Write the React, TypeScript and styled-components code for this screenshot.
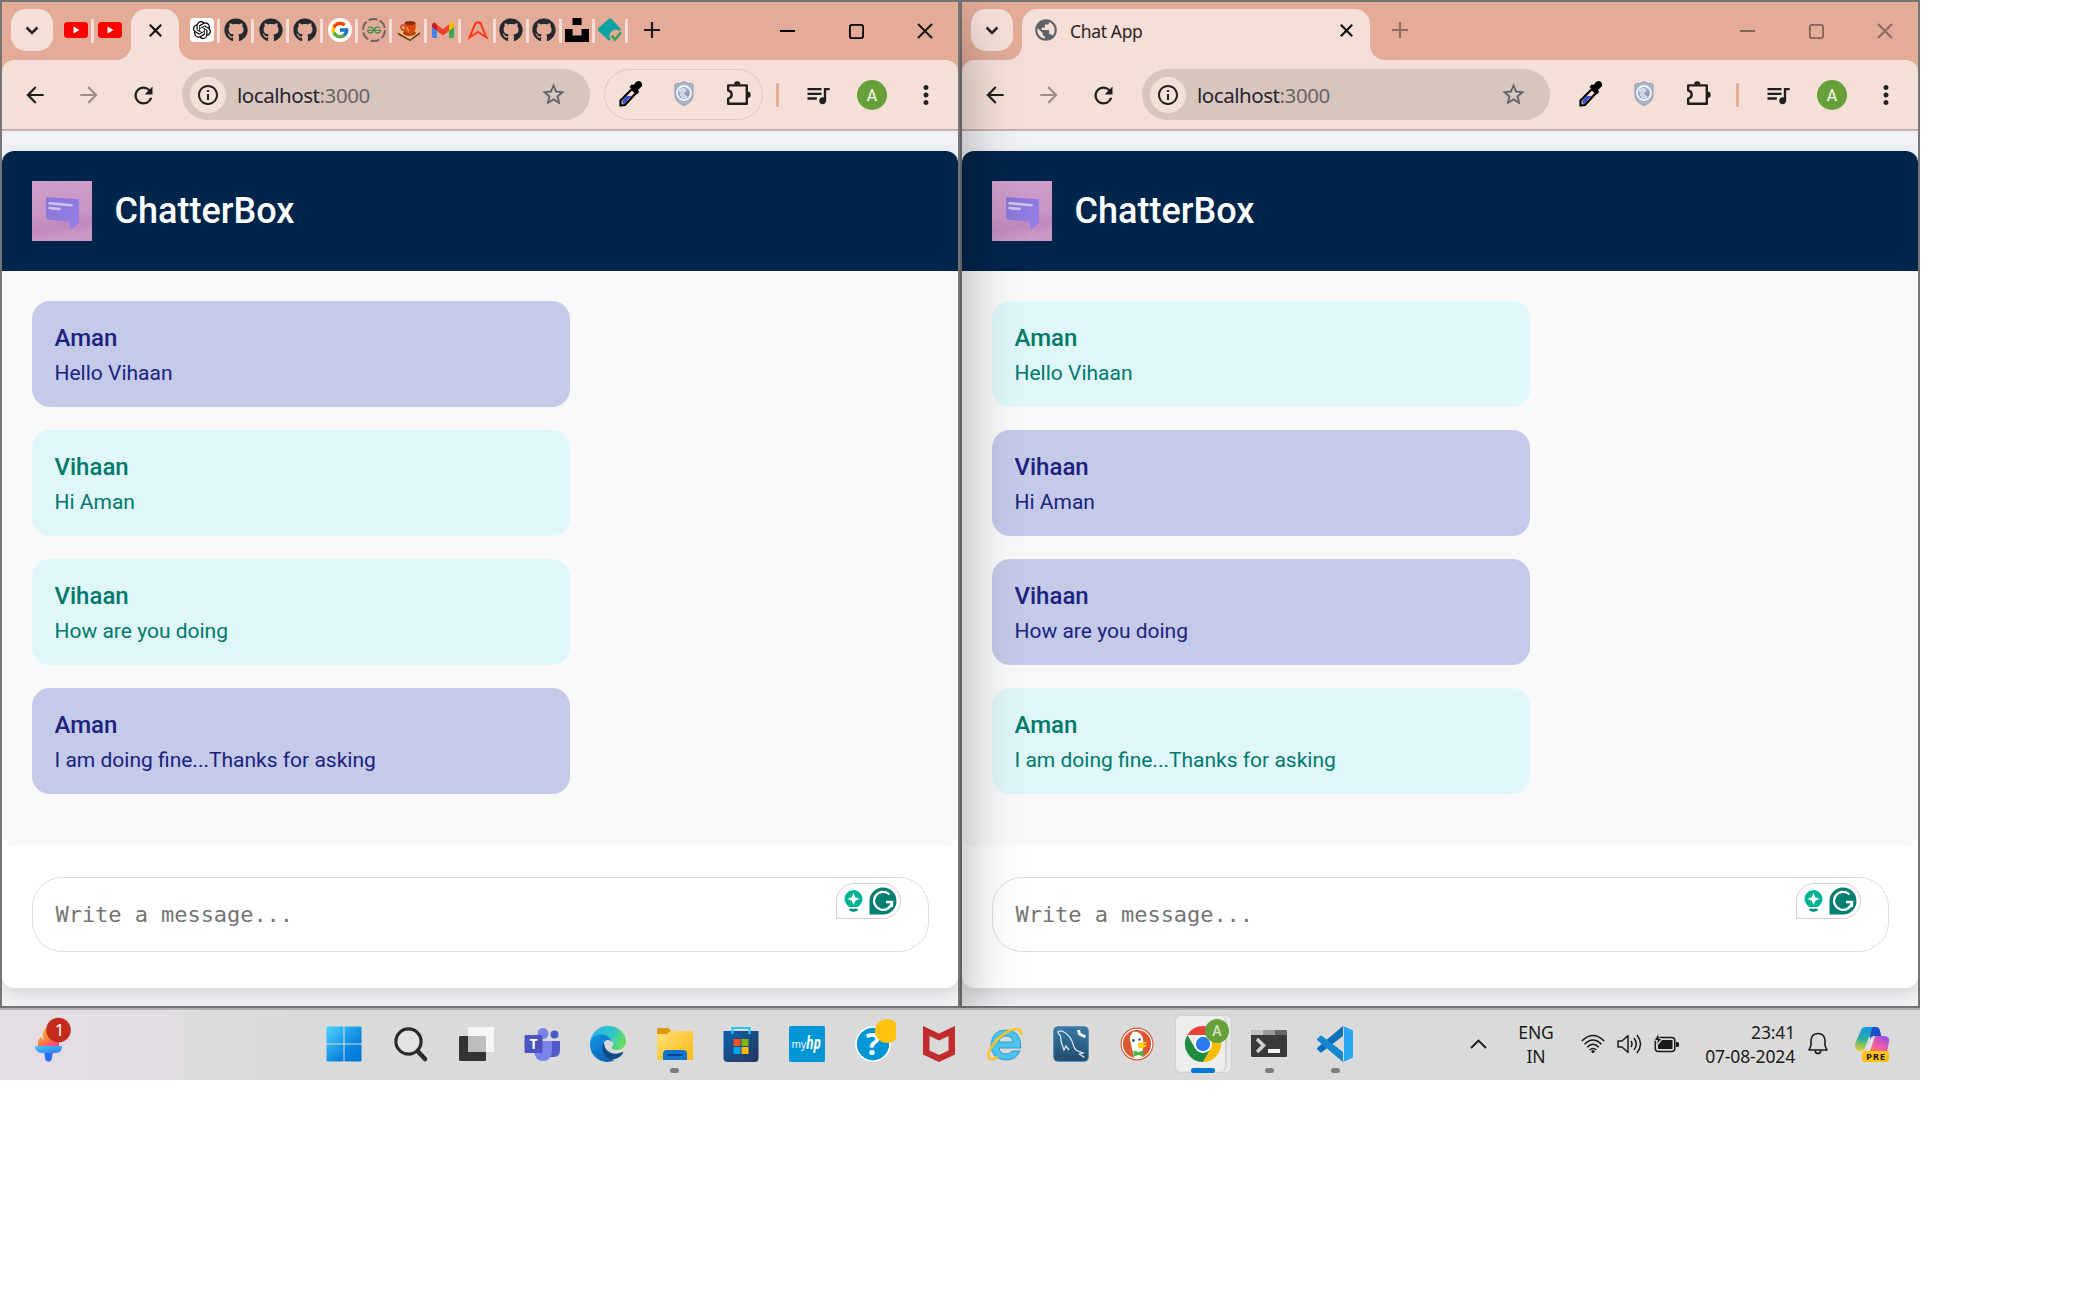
import React from "react";
import styled, { createGlobalStyle, css } from "styled-components";
import { FaGithub } from "react-icons/fa";
import { FcGoogle } from "react-icons/fc";
import { SiOpenai, SiGeeksforgeeks } from "react-icons/si";
import {
  MdArrowBack,
  MdArrowForward,
  MdRefresh,
  MdStarBorder,
  MdQueueMusic,
  MdMoreVert,
  MdPublic,
  MdInfoOutline,
} from "react-icons/md";

const uiFont = '"Noto Sans", "Open Sans", sans-serif';

const GlobalStyle = createGlobalStyle`
  * { box-sizing: border-box; }
  body { margin: 0; background: #fff; }
  svg { display: block; flex: none; }
`;

/* ---------- desktop ---------- */

const Desktop = styled.div`
  width: 1920px;
  height: 1080px;
  display: flex;
  flex-direction: column;
  overflow: hidden;
  font-family: ${uiFont};
`;

const Windows = styled.div`
  display: flex;
  height: 1008px;
`;

const Window = styled.section<{ $front?: boolean }>`
  width: 960px;
  height: 1008px;
  border: 2px solid #757575;
  display: flex;
  flex-direction: column;
  background: #e3ab98;
  ${(p) =>
    p.$front &&
    css`
      position: relative;
      z-index: 1;
      box-shadow: 0 28px 56px rgba(0, 0, 0, 0.34);
    `}
`;

const TitleBar = styled.header`
  height: 58px;
  flex: none;
  display: flex;
  align-items: flex-start;
  padding: 7px 0 0 9px;
`;

const TabSearch = styled.button`
  width: 42px;
  height: 42px;
  border: 0;
  border-radius: 15px;
  background: #f5e0d9;
  display: grid;
  place-items: center;
  padding: 0;
  flex: none;
`;

const Tab = styled.div<{ $width: number; $gap: number }>`
  position: relative;
  width: ${(p) => p.$width}px;
  margin-left: ${(p) => p.$gap}px;
  height: 51px;
  padding-bottom: 9px;
  border-radius: 15px 15px 0 0;
  background: #f5e0d9;
  display: flex;
  align-items: center;
  justify-content: center;
  flex: none;
  &::before,
  &::after {
    content: "";
    position: absolute;
    bottom: 0;
    width: 15px;
    height: 15px;
  }
  &::before {
    left: -15px;
    background: radial-gradient(circle at 0 0, transparent 14.5px, #f5e0d9 15.5px);
  }
  &::after {
    right: -15px;
    background: radial-gradient(circle at 100% 0, transparent 14.5px, #f5e0d9 15.5px);
  }
`;

const TabTitle = styled.span`
  flex: 1;
  margin-left: 11px;
  padding-top: 2px;
  font-size: 17.5px;
  line-height: 40px;
  letter-spacing: -0.35px;
  color: #2b2321;
`;

const MiniTab = styled.div<{ $width: number }>`
  width: ${(p) => p.$width}px;
  height: 42px;
  display: flex;
  align-items: center;
  flex: none;
`;

const Favicon = styled.span<{ $bg?: string; $round?: boolean }>`
  width: 24px;
  height: 24px;
  flex: none;
  display: grid;
  place-items: center;
  background: ${(p) => p.$bg ?? "transparent"};
  border-radius: ${(p) => (p.$round ? "12px" : "4px")};
`;

const TabSeparator = styled.i`
  width: 3px;
  height: 24px;
  margin: 2px 0 0 3px;
  background: #f5e0d9;
`;

const NewTab = styled.button<{ $dim?: boolean; $gap: number }>`
  border: 0;
  padding: 0;
  background: none;
  width: 16px;
  height: 42px;
  margin-left: ${(p) => p.$gap}px;
  display: grid;
  place-items: center;
  opacity: ${(p) => (p.$dim ? 0.42 : 1)};
`;

const WindowControls = styled.div<{ $dim?: boolean }>`
  margin-left: auto;
  margin-right: -1px;
  height: 44px;
  display: flex;
  align-items: center;
  opacity: ${(p) => (p.$dim ? 0.42 : 1)};
`;

const Control = styled.button`
  width: 68.5px;
  height: 44px;
  border: 0;
  padding: 0;
  background: none;
  display: grid;
  place-items: center;
`;

const Toolbar = styled.nav`
  height: 71px;
  flex: none;
  display: flex;
  align-items: center;
  background: #f5e0d9;
  border-bottom: 2px solid #c5b2ad;
  border-radius: 12px 12px 0 0;
  padding: 0 0 0 20px;
`;

const NavButton = styled.button<{ $dim?: boolean }>`
  width: 24px;
  height: 25px;
  border: 0;
  padding: 0;
  margin-right: 30px;
  background: none;
  color: #1f1f1f;
  opacity: ${(p) => (p.$dim ? 0.42 : 1)};
`;

const Omnibox = styled.div`
  width: 408px;
  height: 51px;
  margin-left: -2px;
  border-radius: 26px;
  background: #d7c6bf;
  display: flex;
  align-items: center;
  padding: 0 23px 0 8px;
`;

const SiteInfo = styled.span`
  width: 36px;
  height: 36px;
  border-radius: 50%;
  background: #f5e0d9;
  display: grid;
  place-items: center;
  color: #1f1f1f;
`;

const Url = styled.span`
  flex: 1;
  margin-left: 11px;
  font-size: 20.5px;
  letter-spacing: -0.45px;
  color: #24242b;
  em {
    font-style: normal;
    color: #6a6462;
  }
`;

const Extensions = styled.div<{ $outlined?: boolean }>`
  width: 159px;
  height: 51px;
  margin-left: 14px;
  border-radius: 26px;
  border: 1.5px solid ${(p) => (p.$outlined ? "#dac7c0" : "transparent")};
  display: flex;
  align-items: center;
  justify-content: space-between;
  padding: 0 11px 2px 14px;
`;

const ToolbarDivider = styled.i`
  width: 3px;
  height: 24px;
  margin: 0 25px 0 13px;
  border-radius: 1px;
  background: #e3ab98;
`;

const Avatar = styled.span`
  width: 30px;
  height: 30px;
  margin-left: 25px;
  border-radius: 50%;
  background: #679f38;
  color: #fff;
  font: 16px/31px Roboto, sans-serif;
  text-align: center;
`;

const MenuSlot = styled.span`
  margin-left: 24px;
`;

/* ---------- chat page ---------- */

const Page = styled.main`
  flex: 1;
  background: #f0f2f5;
  padding-top: 20px;
  overflow: hidden;
  font-family: Roboto, sans-serif;
`;

const ChatCard = styled.div`
  height: 837px;
  border-radius: 12px;
  background: #fff;
  overflow: hidden;
  display: flex;
  flex-direction: column;
  box-shadow: 0 6px 18px rgba(0, 0, 0, 0.12);
`;

const ChatHeader = styled.header`
  height: 120px;
  background: #00254b;
  display: flex;
  align-items: center;
  gap: 22.5px;
  padding: 0 30px;
`;

const ChatTitle = styled.h1`
  margin: 0;
  font-size: 36px;
  font-weight: 500;
  line-height: 42px;
  color: #fff;
`;

const Messages = styled.div`
  height: 576px;
  background: #f9f9f9;
  border-radius: 0 0 12px 12px;
  padding: 30px;
  display: flex;
  flex-direction: column;
  gap: 23px;
`;

const Bubble = styled.article<{ $own: boolean }>`
  width: 60%;
  height: 106px;
  padding: 22.5px;
  border-radius: 18px;
  background: ${(p) => (p.$own ? "#c5cae9" : "#dff7f9")};
  color: ${(p) => (p.$own ? "#1a237e" : "#00796b")};
`;

const Author = styled.h2`
  margin: 0 0 9.5px;
  font-size: 24px;
  line-height: 28px;
  font-weight: 500;
`;

const Body = styled.p`
  margin: 0;
  font-size: 21px;
  line-height: 25px;
`;

const Composer = styled.div`
  padding: 30px 29px 30px 30px;
`;

const MessageInput = styled.div`
  height: 75px;
  border: 1.5px solid #ddd;
  border-radius: 30px;
  padding: 5px 27px 0 22.5px;
  display: flex;
  align-items: flex-start;
  justify-content: space-between;
`;

const Placeholder = styled.span`
  font: 22px/64px "DejaVu Sans Mono", monospace;
  letter-spacing: -0.05px;
  color: #757575;
`;

const WritingAssist = styled.span`
  width: 65px;
  height: 36px;
  border: 1.5px solid #cdcedd;
  border-radius: 18px 18px 18px 1px;
  background: #fff;
  display: flex;
  align-items: center;
  justify-content: space-between;
  padding: 0 3px 0 7px;
`;

/* ---------- taskbar ---------- */

const Taskbar = styled.footer`
  position: relative;
  z-index: 2;
  height: 72px;
  border-top: 2px solid #b0b0b0;
  background: linear-gradient(90deg, #e4dde4 0, #e3dce2 160px, #dcdcde 200px, #dadada 300px);
  display: flex;
  align-items: center;
`;

const WidgetSlot = styled.div`
  width: 311px;
  height: 70px;
  padding: 7px 0 0 34px;
`;

const Apps = styled.div`
  display: flex;
  height: 70px;
  align-items: center;
`;

const AppSlot = styled.div`
  width: 66.1px;
  height: 70px;
  display: flex;
  flex-direction: column;
  align-items: center;
  padding-top: 16px;
`;

const Running = styled.i`
  width: 9px;
  height: 5px;
  margin-top: 6px;
  border-radius: 3px;
  background: #7d7d7d;
`;

const ActiveStack = styled.div`
  width: 57px;
  height: 58px;
  margin-top: -11px;
  border-radius: 6px;
  border: 1.5px solid #d0d0d0;
  background: #e7e7e7;
  padding-right: 4px;
`;

const ActiveTile = styled.div`
  height: 55px;
  border-radius: 6px;
  border-right: 2px solid #d0d0d0;
  background: #eeeeee;
  padding: 10px 0 0 9px;
`;

const ActiveMark = styled.i`
  display: block;
  width: 24px;
  height: 5px;
  margin: 6px 0 0 6px;
  border-radius: 3px;
  background: #0078d4;
`;

const Tray = styled.div`
  margin-left: auto;
  display: flex;
  align-items: center;
  height: 68px;
  padding: 0 30px 2px 0;
  color: #1b1b1b;
`;

const TrayText = styled.div<{ $align: string; $width: number; $after: number; $before: number }>`
  width: ${(p) => p.$width}px;
  margin: 0 ${(p) => p.$after}px 0 ${(p) => p.$before}px;
  text-align: ${(p) => p.$align};
  font-size: 17.5px;
  line-height: 24px;
  letter-spacing: -0.15px;
  white-space: nowrap;
`;

const TrayIcons = styled.div`
  display: flex;
  align-items: center;
  gap: 12px;
`;

/* ---------- icon drawings ---------- */

const Cross = ({ size, stroke }: { size: number; stroke: number }) => (
  <svg width={size} height={size} viewBox="0 0 16 16" stroke="#111" strokeWidth={stroke}>
    <path d="M1 1 15 15M15 1 1 15" />
  </svg>
);

const YouTube = () => (
  <svg width="24" height="24" viewBox="0 0 24 24">
    <rect y="4" width="24" height="16" rx="3.5" fill="#f00" />
    <path d="M9.500 8.500v7l6-3.500z" fill="#fff" />
  </svg>
);

const Coffee = () => (
  <svg width="24" height="24" viewBox="0 0 24 24">
    <path d="M1 14.500v2L13 23l10-7v-2z" fill="#6b2c12" />
    <path d="M1 14.500 11 9l12 5-10 7.500z" fill="#efc27a" />
    <ellipse cx="12.500" cy="15" rx="6.500" ry="3" fill="#a84315" />
    <path d="M8 7Q3.500 6.500 4 9.500T9 12.500" fill="none" stroke="#c8400e" strokeWidth="1.600" />
    <path d="M7.500 5h11q1 8-3 10.500-2.500 1.200-5 0Q6.500 13 7.500 5" fill="#d9490f" />
    <ellipse cx="13" cy="5" rx="5.500" ry="2" fill="#8a2b0b" />
    <path d="M10 9q0 3 2 4" stroke="#ff9c3e" fill="none" strokeWidth="1.500" />
  </svg>
);

const Gmail = () => (
  <svg width="22" height="24" viewBox="0 0 22 24">
    <path d="M0 6v12.500Q0 20 1.500 20H5V10z" fill="#4285f4" />
    <path d="M22 6v12.500q0 1.500-1.500 1.500H17V10z" fill="#34a853" />
    <path d="M17 6.500 19 4.500q3-1 3 2V9l-5 4z" fill="#fbbc04" />
    <path d="M5 6.500 11 11l6-4.500V13l-6 4.500L5 13z" fill="#ea4335" />
    <path d="M5 6.500 3 4.500Q0 4 0 7v2l5 4z" fill="#c5221f" />
  </svg>
);

const ArrowLetter = () => (
  <svg width="24" height="24" viewBox="0 0 24 24" fill="none" stroke="#ff3a1a" strokeWidth="2">
    <path d="M9.800 4.500 3.500 19.500l8.500-5.500 8.500 5.500L14.200 4.500" />
    <path d="M9 5.500 12 4l3 1.500" />
  </svg>
);

const Unsplash = () => (
  <svg width="24" height="24" viewBox="0 0 24 24">
    <path d="M7.500 0h9v7h-9zM0 11h7.500v6.500h9V11H24v13H0z" />
  </svg>
);

const DiamondCheck = () => (
  <svg width="24" height="24" viewBox="0 0 24 24">
    <path d="M10 1.500q2-2 4 0l8 8.500q1 1.500 0 3l-8 8q-3 2.500-5 0l-8-7.500q-2-2 0-4z" fill="#0aa3a0" />
    <circle cx="18" cy="18" r="6.500" fill="#e3ab98" />
    <path d="m13.500 17.500 3.500 4 6-7" fill="none" stroke="#30a14e" strokeWidth="2.500" />
  </svg>
);

const Gfg = () => (
  <svg width="24" height="24" viewBox="0 0 24 24">
    <circle cx="12" cy="12" r="11" fill="none" stroke="#6e6360" strokeWidth="1.900" strokeDasharray="9 2.500" />
    <SiGeeksforgeeks x={5} y={5} size={14} color="#2f8d46" />
  </svg>
);

const Dropper = () => (
  <svg width="24" height="26" viewBox="0 0 24 26">
    <path d="M1.500 24.500v-5L13 8l4 4L6 24z" fill="#f5e0d9" stroke="#000" strokeWidth="2.200" />
    <path d="M3.500 22.500v-3l4-4.500h5l-7 8z" fill="#3850c8" />
    <path d="m10.500 6 2-2.500 2 .5 3-3.500q3-1 4.500.500t1 4L19 9l1 2-2 2.500z" />
  </svg>
);

const Shield = () => (
  <svg width="22" height="25" viewBox="0 0 22 25">
    <path d="M10 .7q4 2.300 9 2.300v11q0 7-9 10.500Q1 21 1 14V3q5 0 9-2.300" fill="#aab5c8" stroke="#929db2" />
    <circle cx="10" cy="12" r="7" fill="#93a2bb" stroke="#f4f6fa" strokeWidth="1.800" />
    <path d="M5 10q4-5 7-1l-3 4 4 3q-5 2-7-3m7-6 3 2" fill="#c9d4e4" stroke="#e8edf5" />
  </svg>
);

const Puzzle = () => (
  <svg width="25" height="25" viewBox="0 0 25 25" fill="#1f1f1f">
    <path
      d="M2.200 4.400h18.600v18.400H2.200v-5.200q3.500-.5 3.500-4t-3.500-4z"
      fill="none"
      stroke="#1f1f1f"
      strokeWidth="2.400"
      strokeLinejoin="round"
    />
    <path d="M8 3.500a3.200 3.200 0 0 1 6.400 0zM21.500 10.500a3.200 3.200 0 0 1 0 6.400z" />
  </svg>
);

const ChatLogo = () => (
  <svg width="60" height="60" viewBox="0 0 60 60">
    <defs>
      <linearGradient id="logoBg" x1="0" y1="0" x2=".15" y2="1">
        <stop offset="0" stopColor="#cf9fca" />
        <stop offset=".6" stopColor="#c894c4" />
        <stop offset=".82" stopColor="#c088bf" />
        <stop offset="1" stopColor="#cb98c5" />
      </linearGradient>
      <linearGradient id="logoBubble" x1="0" y1="0" x2="1" y2="1">
        <stop offset="0" stopColor="#8377d8" />
        <stop offset="1" stopColor="#9a7fe6" />
      </linearGradient>
    </defs>
    <rect width="60" height="60" fill="url(#logoBg)" />
    <path d="M16 16.200 45 18q2 .3 2 2v21q-.5 2-2 3l-6.500 5.200-1-8.200L16 38.500q-2-.5-2-2.500V18q0-2 2-1.800" fill="url(#logoBubble)" />
    <path d="m17.500 22.200 22 2m-22 2.800 10 1" stroke="#d6c3ec" strokeWidth="2.600" strokeLinecap="round" />
  </svg>
);

const Bulb = () => (
  <svg width="19" height="24" viewBox="0 0 19 24" fill="#00b295">
    <path d="M9.500 1a9 9 0 0 1 9 9q0 4-4.500 8H5Q.5 14 .5 10a9 9 0 0 1 9-9" />
    <path d="M9.500 4 11.300 8.200l4.200 1.800-4.200 1.800L9.500 16l-1.800-4.200L3.500 10l4.200-1.800z" fill="#fff" />
    <path d="M5 19.800h9q0 3-4.500 3T5 19.800" fill="#028a76" />
  </svg>
);

const GrammarBadge = () => (
  <svg width="28" height="28" viewBox="0 0 28 28">
    <path d="M14 .5A13.500 13.500 0 0 1 14 27.500H.5V14A13.500 13.500 0 0 1 14 .5" fill="#027e6f" />
    <path d="M20.500 7.500A9 9 0 1 0 23 15h-6M23 20v-5" fill="none" stroke="#fff" strokeWidth="2.300" />
  </svg>
);

const Torch = () => (
  <svg width="40" height="46" viewBox="0 0 40 46">
    <defs>
      <linearGradient id="flame" x1=".3" y1="0" x2=".7" y2="1">
        <stop offset="0" stopColor="#f2b51d" />
        <stop offset=".6" stopColor="#f98a3c" />
        <stop offset="1" stopColor="#ff4778" />
      </linearGradient>
      <linearGradient id="bowl" x1="0" y1="0" x2="1" y2="1">
        <stop offset="0" stopColor="#49c3f5" />
        <stop offset="1" stopColor="#2e7df0" />
      </linearGradient>
    </defs>
    <path d="M4 29q-1-6 3-9 1 3 3 3-4-9 5-14l10 10v10z" fill="url(#flame)" />
    <path d="M10 35h9l-1.500 8q-3 3.500-6 0z" fill="#2d6cf0" />
    <path d="M1 29h27q0 7-6 7H8q-7 0-7-7" fill="url(#bowl)" />
    <circle cx="24.500" cy="13" r="12.300" fill="#c42b1c" />
    <text x="25.500" y="19" fontSize="17" fill="#fff" textAnchor="middle" fontFamily="Noto Sans, sans-serif">1</text>
  </svg>
);

const Start = () => (
  <svg width="36" height="36" viewBox="0 0 36 36">
    <defs>
      <linearGradient id="win" x1="0" y1="0" x2="1" y2="1">
        <stop offset="0" stopColor="#4fd0ff" />
        <stop offset=".65" stopColor="#0a84dd" />
        <stop offset="1" stopColor="#0078d4" />
      </linearGradient>
    </defs>
    <path d="M.5 1.500q0-1 1-1h16v17H.5zM18.500.5h16q1 0 1 1v16h-17zM.5 18.500h17v17h-16q-1 0-1-1zM18.500 18.500h17v16q0 1-1 1h-16z" fill="url(#win)" />
  </svg>
);

const Search = () => (
  <svg width="36" height="36" viewBox="0 0 36 36" fill="none" stroke="#2b2b2b">
    <circle cx="16.500" cy="15.500" r="12.600" fill="#e3e3e3" strokeWidth="3.200" />
    <path d="m26 25.500 7 7.500" strokeWidth="4.500" strokeLinecap="round" />
  </svg>
);

const TaskView = () => (
  <svg width="36" height="36" viewBox="0 0 36 36">
    <rect x="1" y="10" width="27" height="25" rx="1.500" fill="#333" />
    <rect x="10" y="1" width="27" height="25" rx="1.500" fill="#f8f8f8" opacity=".93" />
    <path d="M10 10h18v16H10z" fill="#bdbdbd" />
  </svg>
);

const Teams = () => (
  <svg width="36" height="36" viewBox="0 0 36 36">
    <circle cx="30.500" cy="8.500" r="4" fill="#5059c9" />
    <circle cx="19" cy="7.500" r="5.500" fill="#7b83eb" />
    <path d="M24 15h12v9q0 7-6 7h-4z" fill="#5059c9" />
    <path d="M10 15h18v10q-1 10-9 10t-9-10z" fill="#7b83eb" />
    <rect x=".5" y="9" width="18" height="18" rx="1.500" fill="#4b53bc" />
    <text x="9.500" y="23" fontSize="14" fontWeight="700" fill="#fff" textAnchor="middle" fontFamily="Open Sans, sans-serif">T</text>
  </svg>
);

const Edge = () => (
  <svg width="36" height="36" viewBox="0 0 36 36">
    <defs>
      <linearGradient id="edgeTop" x1="0" y1=".2" x2="1" y2=".5">
        <stop offset="0" stopColor="#30b4ee" />
        <stop offset=".6" stopColor="#2fc4c8" />
        <stop offset="1" stopColor="#69e05c" />
      </linearGradient>
      <linearGradient id="edgeLow" x1="0" y1="0" x2=".6" y2="1">
        <stop offset="0" stopColor="#0f9be6" />
        <stop offset="1" stopColor="#0f62b8" />
      </linearGradient>
    </defs>
    <path d="M0 17C1 6 9 0 18 0c11 0 18 8 18 15 0 6-5 9-9 9-5 0-6-2-5-3 2-2 2-5-1-8C15 7 4 8 0 17" fill="url(#edgeTop)" />
    <path d="M0 18C1 9 9 7 15 9c5 2 7 5 7 7-3-4-9-2-9 4 0 8 7 13 11 14-3 2-6 2-8 2C7 35 0 28 0 18" fill="url(#edgeLow)" />
    <path d="M14 16c-5 9 3 20 11 17 4-1 7-4 8-6 1-1 0-1-1-1-7 4-18 1-18-10" fill="#114a8b" />
  </svg>
);

const Explorer = () => (
  <svg width="36" height="36" viewBox="0 0 36 36">
    <defs>
      <linearGradient id="folder" x1="0" y1="0" x2="1" y2="1">
        <stop offset="0" stopColor="#ffe07a" />
        <stop offset="1" stopColor="#fbb90c" />
      </linearGradient>
    </defs>
    <path d="M0 3.500q0-1.500 1.500-1.500H11l4 3.500V12H0z" fill="#dc9a08" />
    <path d="M0 8h10l4-3h22v29H0z" fill="url(#folder)" />
    <path d="M6 34v-6q0-4 4-4h16q4 0 4 4v6z" fill="#1174cc" />
    <path d="M10.500 29h15" stroke="#0a3f80" strokeWidth="1.800" />
  </svg>
);

const Store = () => (
  <svg width="36" height="36" viewBox="0 0 36 36">
    <defs>
      <linearGradient id="bag" x1="0" y1="0" x2="1" y2="1">
        <stop offset="0" stopColor="#0b63ad" />
        <stop offset="1" stopColor="#27335c" />
      </linearGradient>
    </defs>
    <path d="M.5 5h35v27q0 4-4 4h-27q-4 0-4-4z" fill="url(#bag)" />
    <path d="M9.500 8V2h17v6" fill="none" stroke="#2cc3f5" strokeWidth="2.200" />
    <path d="M10.500 13h7v7h-7z" fill="#f25022" />
    <path d="M18.500 13h7v7h-7z" fill="#7fba00" />
    <path d="M10.500 21h7v7h-7z" fill="#00a4ef" />
    <path d="M18.500 21h7v7h-7z" fill="#ffb900" />
  </svg>
);

const MyHp = () => (
  <svg width="36" height="36" viewBox="0 0 36 36" fill="#fff" fontFamily="Open Sans, sans-serif">
    <rect width="36" height="36" rx="2" fill="#0096d6" />
    <text x="2.500" y="22" fontSize="11" textLength="14.500" lengthAdjust="spacingAndGlyphs">my</text>
    <text x="17" y="22.500" fontSize="17" fontWeight="700" fontStyle="italic" textLength="15" lengthAdjust="spacingAndGlyphs">hp</text>
  </svg>
);

const Help = () => (
  <svg width="46" height="44" viewBox="-5 -8 46 44">
    <circle cx="18" cy="18" r="17" fill="#0096d6" stroke="#fff" strokeWidth="1.700" />
    <text x="18" y="29" fontSize="30" fontWeight="700" fill="#fff" textAnchor="middle" fontFamily="Open Sans, sans-serif">?</text>
    <circle cx="32" cy="5" r="12" fill="#ffc20e" />
  </svg>
);

const McAfee = () => (
  <svg width="36" height="36" viewBox="0 0 36 36">
    <path d="m2 0 16 7.500L34 0v28.500L18 36 2 28.500zM8.500 10v14.500L18 29l9.500-4.500V10L18 14.500z" fill="#c02b2e" fillRule="evenodd" />
  </svg>
);

const Explorer11 = () => (
  <svg width="36" height="36" viewBox="0 0 36 36">
    <path d="M34 22H12q1 6 7 6 4 0 6-3h8q-4 9-14 9Q4 33 4 19 5 4 19 4q15 0 15 18M12 16h14q-1-6-7-6t-7 6" fill="#4cc4ee" stroke="#1a8fc8" strokeWidth=".8" />
    <path d="M34 9q1-5-4-6Q20 3 9 15-1 27 2 32q2 3 9-1" fill="none" stroke="#f7c326" strokeWidth="2.600" />
  </svg>
);

const MySql = () => (
  <svg width="36" height="36" viewBox="0 0 36 36">
    <defs>
      <linearGradient id="sql" x1="0" y1="0" x2="0" y2="1">
        <stop offset="0" stopColor="#3a7aa6" />
        <stop offset="1" stopColor="#1d4a6b" />
      </linearGradient>
    </defs>
    <rect x=".7" y=".7" width="34.600" height="34.600" rx="4" fill="url(#sql)" stroke="#4d86a8" />
    <path d="M5 6q1-2 5-.5Q18 9 21 21q1 3 4 4l5 2-3.500 1 5 3.500M5 6q0 2 2.500 4Q8 17 9.500 20l1.500 4 2-4 3 4" fill="none" stroke="#dfeaf2" strokeWidth="1.300" />
    <path d="m25.500 4 1 4 6 3" stroke="#f5f8fa" strokeWidth="3" fill="none" />
  </svg>
);

const Duck = () => (
  <svg width="36" height="36" viewBox="0 0 36 36">
    <circle cx="18" cy="18" r="16.500" fill="#de5833" />
    <circle cx="18" cy="18" r="14.700" fill="none" stroke="#fff" strokeWidth="1.300" />
    <path d="M15 31.500 12 18q-3-9 2-11-2-1-1-1 7-1 10 4 2 4 1 10l-1 11q-4 2-8 .5" fill="#fff" />
    <path d="M19 17q5-1 9-1-1 2-4 2.500 2 .5 4 .5-3 4-9 3z" fill="#fdd20a" />
    <circle cx="14.500" cy="14.500" r="1.400" fill="#2d4f8e" />
    <circle cx="20.500" cy="13.500" r="1.200" fill="#2d4f8e" />
    <path d="m14.500 24.500 5 1.500 5-1.500v6l-5-1.500-5 1.500z" fill="#4cb748" />
  </svg>
);

const Chrome = () => (
  <svg width="44" height="44" viewBox="0 -8 44 44" overflow="visible">
    <path d="M2.400 9A18 18 0 0 1 33.600 9H18z" fill="#ea4335" />
    <path d="M18 36A18 18 0 0 1 2.400 9l7.800 13.500L18 27l7.800-4.500z" fill="#1e8e3e" />
    <path d="M25.800 22.500 18 36A18 18 0 0 0 33.600 9H18z" fill="#fbbc04" />
    <circle cx="18" cy="18" r="9" fill="#fff" />
    <circle cx="18" cy="18" r="7.200" fill="#2b7bf0" />
    <circle cx="32" cy="5" r="12" fill="#679f38" />
    <text x="32" y="10.300" fontSize="14" fontWeight="500" fill="#d5e5c8" textAnchor="middle" fontFamily="Roboto, sans-serif">A</text>
  </svg>
);

const Terminal = () => (
  <svg width="36" height="36" viewBox="0 0 36 36">
    <rect y="4" width="36" height="27" rx="1.500" fill="#3a3a3a" />
    <path d="M0 5.500Q0 4 1.500 4H12v5H0z" fill="#c2c2c2" />
    <path d="M12 4h12v5H12z" fill="#9b9b9b" />
    <path d="M24 4h10.500Q36 4 36 5.500V9H24z" fill="#666" />
    <path d="m6 13 6.500 6.500L6 26" fill="none" stroke="#cfcfcf" strokeWidth="3.500" />
    <rect x="17" y="23" width="12" height="4" rx=".5" fill="#f2f2f2" />
  </svg>
);

const VsCode = () => (
  <svg width="36" height="36" viewBox="0 0 36 36">
    <path d="M26 0v10L5 26q-1 1-2 0l-2.500-2.500q-1-1 0-2z" fill="#0a72b8" />
    <path d="M26 36V26L5 10q-1-1-2 0L.5 12.500q-1 1 0 2z" fill="#1487d0" />
    <path d="m26 0 9 4q1 .5 1 2v24q0 1.500-1 2l-9 4q1-1 1-3V3q0-2-1-3" fill="#27a5f2" />
  </svg>
);

const Wifi = () => (
  <svg width="24" height="20" viewBox="0 0 24 20" fill="none" stroke="currentColor" strokeWidth="1.600">
    <path d="M.8 7q11.200-11 22.400 0M3.600 10.200q8.400-8.400 16.800 0M6.200 13.200q5.800-5.800 11.600 0M8.700 16q3.300-3 6.600 0" />
    <circle cx="12" cy="17.500" r="1.600" fill="currentColor" stroke="none" />
  </svg>
);

const Speaker = () => (
  <svg width="25" height="22" viewBox="0 0 25 22" fill="none" stroke="currentColor" strokeWidth="1.500">
    <path d="M1 8h4l6-5.500v17L5 14H1z" strokeLinejoin="round" />
    <path d="M14 8q2 3 0 6M17 5q4.500 6 0 12M20 2q7 9 0 18" />
  </svg>
);

const Battery = () => (
  <svg width="25" height="22" viewBox="0 0 25 22">
    <rect x="1.300" y="4.500" width="19.500" height="14" rx="3" fill="none" stroke="currentColor" strokeWidth="1.500" />
    <path d="M22 9h1.500q1.500 0 1.500 1.500v2q0 1.500-1.500 1.500H22z" fill="currentColor" />
    <path d="M8 7h10.500v9H4v-4z" fill="currentColor" />
    <path d="M4.500 0 .5 7.500h3l-1 4.500 5.500-6.500H5z" fill="currentColor" stroke="#dadada" strokeWidth=".8" />
  </svg>
);

const Bell = () => (
  <svg width="20" height="24" viewBox="0 0 20 24" fill="none" stroke="currentColor" strokeWidth="1.600">
    <path d="M10 1.500q6.500 0 7 7v5l2 4.500H1l2-4.500v-5q.5-7 7-7z" strokeLinejoin="round" />
    <path d="M7 18.500q.5 3 3 3t3-3" />
  </svg>
);

const Copilot = () => (
  <svg width="36" height="36" viewBox="0 0 36 36">
    <defs>
      <linearGradient id="copA" x1=".3" y1="0" x2=".1" y2="1">
        <stop offset="0" stopColor="#1797ea" />
        <stop offset=".5" stopColor="#2fae9a" />
        <stop offset="1" stopColor="#f7d313" />
      </linearGradient>
      <linearGradient id="copB" x1="1" y1="0" x2="0" y2="1">
        <stop offset="0" stopColor="#8a4cf0" />
        <stop offset=".5" stopColor="#ee5aa8" />
        <stop offset="1" stopColor="#fb8a3c" />
      </linearGradient>
    </defs>
    <path d="M7 4q1-3 5-3h9q4 0 5 4l1 4-12 2-4 10q-1 4-5 4-6 0-5-7z" fill="url(#copA)" />
    <path d="M19 1h3q3 0 4 4l1 5h-7q-3 0-4 4 0-9 3-13" fill="#1c50c8" />
    <path d="M22 10h8q6 0 5 6l-2 10H10q4 0 5-4l3-9q1-3 4-3" fill="url(#copB)" />
    <path d="M20 10q-2 1-3 4l-4 11h3l5-15z" fill="#e8e4ea" />
    <rect x="8" y="25" width="27" height="11" rx="2.500" fill="#ffc20e" />
    <text x="21.500" y="34" fontSize="9.500" fontWeight="700" fill="#1b1b1b" textAnchor="middle" textLength="19" fontFamily="Open Sans, sans-serif">PRE</text>
  </svg>
);

/* ---------- composition ---------- */

const github = <FaGithub size={24} color="#24292e" />;

const backgroundTabs: { icon: React.ReactNode; width: number; bg?: string; round?: boolean }[] = [
  { icon: <SiOpenai size={18} />, width: 34, bg: "#fff" },
  { icon: github, width: 34.5 },
  { icon: github, width: 34.5 },
  { icon: github, width: 34.5 },
  { icon: <FcGoogle size={20} />, width: 34.5, bg: "#fff", round: true },
  { icon: <Gfg />, width: 34.5 },
  { icon: <Coffee />, width: 34.5 },
  { icon: <Gmail />, width: 34.5 },
  { icon: <ArrowLetter />, width: 33.5 },
  { icon: github, width: 33 },
  { icon: github, width: 33 },
  { icon: <Unsplash />, width: 33 },
  { icon: <DiamondCheck />, width: 33 },
];

const PinnedTabs = styled.div`
  display: flex;
  margin-left: 11px;
`;

const BackgroundTabs = styled.div`
  display: flex;
  margin-left: 11px;
`;

const conversation = [
  { author: "Aman", text: "Hello Vihaan" },
  { author: "Vihaan", text: "Hi Aman" },
  { author: "Vihaan", text: "How are you doing" },
  { author: "Aman", text: "I am doing fine...Thanks for asking" },
];

const TabSearchButton = () => (
  <TabSearch>
    <svg width="14" height="9" viewBox="0 0 14 9" fill="none" stroke="#1f1f1f" strokeWidth="2.600">
      <path d="m1.500 1.500 5.500 5.500 5.500-5.500" />
    </svg>
  </TabSearch>
);

const NewTabButton = ({ dim, gap }: { dim?: boolean; gap: number }) => (
  <NewTab $dim={dim} $gap={gap}>
    <svg width="16" height="16" viewBox="0 0 16 16" stroke="#1f1f1f" strokeWidth="2.200">
      <path d="M8 0v16M0 8h16" />
    </svg>
  </NewTab>
);

const Controls = ({ dim }: { dim?: boolean }) => (
  <WindowControls $dim={dim}>
    <Control>
      <svg width="15" height="2" viewBox="0 0 15 2">
        <path d="M0 0h15v2H0z" />
      </svg>
    </Control>
    <Control>
      <svg width="15" height="15" viewBox="0 0 15 15">
        <rect x=".9" y=".9" width="13.200" height="13.200" rx="2" fill="none" stroke="#000" strokeWidth="1.800" />
      </svg>
    </Control>
    <Control>
      <Cross size={16} stroke={1.9} />
    </Control>
  </WindowControls>
);

const BrowserToolbar = ({ outlined }: { outlined?: boolean }) => (
  <Toolbar>
    <NavButton>
      <MdArrowBack size={26} />
    </NavButton>
    <NavButton $dim>
      <MdArrowForward size={26} />
    </NavButton>
    <NavButton>
      <MdRefresh size={27} />
    </NavButton>
    <Omnibox>
      <SiteInfo>
        <MdInfoOutline size={24} />
      </SiteInfo>
      <Url>
        localhost<em>:3000</em>
      </Url>
      <MdStarBorder size={27} color="#5f6368" />
    </Omnibox>
    <Extensions $outlined={outlined}>
      <Dropper />
      <Shield />
      <Puzzle />
    </Extensions>
    <ToolbarDivider />
    <MdQueueMusic size={28} color="#1f1f1f" />
    <Avatar>A</Avatar>
    <MenuSlot>
      <MdMoreVert size={30} color="#1f1f1f" />
    </MenuSlot>
  </Toolbar>
);

const ChatPage = ({ me }: { me: string }) => (
  <Page>
    <ChatCard>
      <ChatHeader>
        <ChatLogo />
        <ChatTitle>ChatterBox</ChatTitle>
      </ChatHeader>
      <Messages>
        {conversation.map((m) => (
          <Bubble key={m.text} $own={m.author === me}>
            <Author>{m.author}</Author>
            <Body>{m.text}</Body>
          </Bubble>
        ))}
      </Messages>
      <Composer>
        <MessageInput>
          <Placeholder>Write a message...</Placeholder>
          <WritingAssist>
            <Bulb />
            <GrammarBadge />
          </WritingAssist>
        </MessageInput>
      </Composer>
    </ChatCard>
  </Page>
);

const apps: { icon: React.ReactNode; running?: boolean }[] = [
  { icon: <Start /> },
  { icon: <Search /> },
  { icon: <TaskView /> },
  { icon: <Teams /> },
  { icon: <Edge /> },
  { icon: <Explorer />, running: true },
  { icon: <Store /> },
  { icon: <MyHp /> },
  { icon: <HelpSlot /> },
  { icon: <McAfee /> },
  { icon: <Explorer11 /> },
  { icon: <MySql /> },
  { icon: <Duck /> },
  { icon: <ChromeTile /> },
  { icon: <Terminal />, running: true },
  { icon: <VsCode />, running: true },
];

function HelpSlot() {
  return (
    <HelpLift>
      <Help />
    </HelpLift>
  );
}

function ChromeTile() {
  return (
    <ActiveStack>
      <ActiveTile>
        <ChromeLift>
          <Chrome />
        </ChromeLift>
        <ActiveMark />
      </ActiveTile>
    </ActiveStack>
  );
}

const HelpLift = styled.span`
  margin-top: -8px;
`;

const ChromeLift = styled.span`
  display: block;
  margin-top: -8px;
`;

export default function App() {
  return (
    <>
      <GlobalStyle />
      <Desktop>
        <Windows>
          <Window $front>
            <TitleBar>
              <TabSearchButton />
              <PinnedTabs>
                <MiniTab $width={34}>
                  <YouTube />
                  <TabSeparator />
                </MiniTab>
                <MiniTab $width={24}>
                  <YouTube />
                </MiniTab>
              </PinnedTabs>
              <Tab $width={48} $gap={9}>
                <Cross size={13} stroke={2.7} />
              </Tab>
              <BackgroundTabs>
                {backgroundTabs.map((t, i) => (
                  <MiniTab key={i} $width={t.width}>
                    <Favicon $bg={t.bg} $round={t.round}>
                      {t.icon}
                    </Favicon>
                    <TabSeparator />
                  </MiniTab>
                ))}
              </BackgroundTabs>
              <NewTabButton gap={13} />
              <Controls />
            </TitleBar>
            <BrowserToolbar outlined />
            <ChatPage me="Aman" />
          </Window>
          <Window>
            <TitleBar>
              <TabSearchButton />
              <Tab $width={348} $gap={9}>
                <TabContent>
                  <MdPublic size={26} color="#5f6368" />
                  <TabTitle>Chat App</TabTitle>
                  <Cross size={13} stroke={2.7} />
                </TabContent>
              </Tab>
              <NewTabButton dim gap={22} />
              <Controls dim />
            </TitleBar>
            <BrowserToolbar />
            <ChatPage me="Vihaan" />
          </Window>
        </Windows>
        <Taskbar>
          <WidgetSlot>
            <Torch />
          </WidgetSlot>
          <Apps>
            {apps.map((a, i) => (
              <AppSlot key={i}>
                {a.icon}
                {a.running && <Running />}
              </AppSlot>
            ))}
          </Apps>
          <Tray>
            <svg width="17" height="10" viewBox="0 0 17 10" fill="none" stroke="currentColor" strokeWidth="1.900">
              <path d="m1 9 7.500-7.500L16 9" />
            </svg>
            <TrayText $align="center" $width={40} $before={29} $after={25}>
              ENG
              <br />
              IN
            </TrayText>
            <TrayIcons>
              <Wifi />
              <Speaker />
              <Battery />
            </TrayIcons>
            <TrayText $align="right" $width={94} $before={22} $after={13}>
              23:41
              <br />
              07-08-2024
            </TrayText>
            <Bell />
            <CopilotSlot>
              <Copilot />
            </CopilotSlot>
          </Tray>
        </Taskbar>
      </Desktop>
    </>
  );
}

const TabContent = styled.div`
  width: 100%;
  display: flex;
  align-items: center;
  padding: 0 17px 0 11px;
`;

const CopilotSlot = styled.span`
  margin-left: 26px;
`;
